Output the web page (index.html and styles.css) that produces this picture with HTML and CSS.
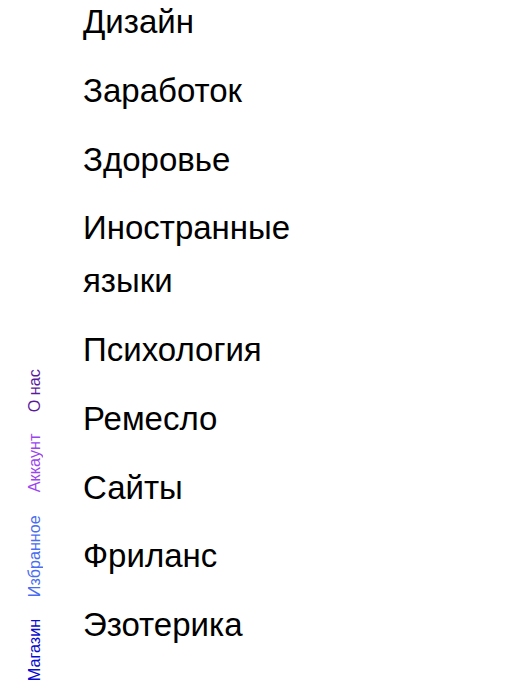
FILE: index.html
```html
<!DOCTYPE html>
<html lang="ru">
<head>
<meta charset="utf-8">
<title>Категории</title>
<link rel="stylesheet" href="styles.css">
</head>
<body>
<div class="page">
  <nav class="side-nav">
    <a class="nav-link nav-shop" href="#">Магазин</a>
    <a class="nav-link nav-fav" href="#">Избранное</a>
    <a class="nav-link nav-account" href="#">Аккаунт</a>
    <a class="nav-link nav-about" href="#">О нас</a>
  </nav>
  <ul class="categories">
    <li>Дизайн</li>
    <li>Заработок</li>
    <li>Здоровье</li>
    <li>Иностранные языки</li>
    <li>Психология</li>
    <li>Ремесло</li>
    <li>Сайты</li>
    <li>Фриланс</li>
    <li>Эзотерика</li>
  </ul>
</div>
</body>
</html>
```
FILE: styles.css
```css
html, body {
  margin: 0;
  padding: 0;
  background: #ffffff;
}
body {
  font-family: "Liberation Sans", Arial, sans-serif;
  color: #000000;
}
.page {
  display: flex;
  align-items: stretch;
  height: 689px;
  padding: 0 8px 8px 8px;
  box-sizing: border-box;
}
.side-nav {
  align-self: flex-end;
  writing-mode: vertical-rl;
  transform: rotate(180deg);
  display: flex;
  gap: 22px;
  padding-right: 17px;
  font-size: 16.2px;
}
.nav-link {
  text-decoration: none;
}
.nav-shop { color: #0a0ad0; }
.nav-fav { color: #4a6cf0; }
.nav-account { color: #9b45f0; }
.nav-about { color: #5a1a9a; }
.categories {
  list-style: none;
  margin: -4px 0 0 39px;
  padding: 0;
  width: 230px;
  font-size: 33px;
  line-height: 1.6;
}
.categories li {
  margin-bottom: 16px;
}
```
